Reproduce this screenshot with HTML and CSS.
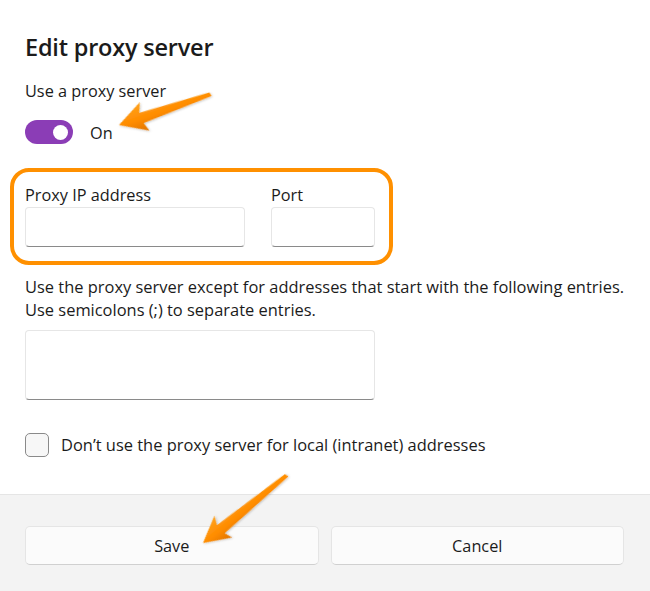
FILE: index.html
```html
<!DOCTYPE html>
<html lang="en">
<head>
<meta charset="utf-8">
<title>Edit proxy server</title>
<link rel="stylesheet" href="styles.css">
</head>
<body>
<div class="dialog">
  <div class="content">
    <h1 class="title">Edit proxy server</h1>
    <div class="label">Use a proxy server</div>
    <div class="toggle-row">
      <span class="toggle"><span class="knob"></span></span>
      <span class="toggle-text">On</span>
    </div>
    <div class="fields">
      <div class="field field-ip">
        <div class="field-label">Proxy IP address</div>
        <div class="input"></div>
      </div>
      <div class="field field-port">
        <div class="field-label">Port</div>
        <div class="input"></div>
      </div>
    </div>
    <p class="desc">Use the proxy server except for addresses that start with the following entries.<br>Use semicolons (;) to separate entries.</p>
    <div class="textarea"></div>
    <div class="check-row">
      <span class="checkbox"></span>
      <span class="check-text">Don’t use the proxy server for local (intranet) addresses</span>
    </div>
  </div>
  <div class="footer">
    <button class="btn">Save</button>
    <button class="btn">Cancel</button>
  </div>
</div>
<svg class="annotations" width="650" height="591" viewBox="0 0 650 591">
  <defs>
    <linearGradient id="ag" x1="0" y1="0" x2="0" y2="1">
      <stop offset="0" stop-color="#ffa21c"/>
      <stop offset="0.55" stop-color="#ff8c00"/>
      <stop offset="1" stop-color="#e07400"/>
    </linearGradient>
    <filter id="sh" x="-20%" y="-20%" width="140%" height="140%">
      <feDropShadow dx="0.5" dy="1" stdDeviation="0.8" flood-color="#000" flood-opacity="0.25"/>
    </filter>
  </defs>
  <rect class="hl" x="12" y="170" width="379" height="93" rx="17" ry="17"/>
  <g transform="translate(119 125) rotate(-18.6)" filter="url(#sh)">
    <polygon points="0,0 27,-15 23,-5 96,-2 97,2 24,6 27,15" fill="url(#ag)"/>
  </g>
  <g transform="translate(203 543) rotate(-39)" filter="url(#sh)">
    <polygon points="0,0 26,-14 22,-5 107,-2 108,2 23,6 26,14" fill="url(#ag)"/>
  </g>
</svg>
</body>
</html>
```
FILE: styles.css
```css
html, body {
  margin: 0;
  padding: 0;
}
body {
  width: 650px;
  height: 591px;
  background: #ffffff;
  font-family: "Open Sans", "Noto Sans", sans-serif;
  color: #1b1b1b;
  position: relative;
  overflow: hidden;
}
.dialog {
  display: flex;
  flex-direction: column;
  height: 591px;
}
.content {
  padding: 33px 25px 0 25px;
  height: 461px;
  box-sizing: border-box;
}
.title {
  margin: 0;
  font-size: 23.5px;
  line-height: 28px;
  font-weight: 600;
  letter-spacing: -0.2px;
}
.label {
  margin-top: 20px;
  font-size: 16.3px;
  line-height: 20px;
}
.toggle-row {
  display: flex;
  align-items: center;
  margin-top: 19px;
  height: 24px;
}
.toggle {
  width: 48px;
  height: 24px;
  border-radius: 12px;
  background: #8b3db6;
  position: relative;
  display: flex;
  align-items: center;
  justify-content: flex-end;
  padding-right: 5px;
  box-sizing: border-box;
}
.knob {
  width: 15px;
  height: 15px;
  border-radius: 50%;
  background: #fff;
}
.toggle-text {
  margin-left: 17px;
  font-size: 16.3px;
  line-height: 20px;
  position: relative;
  top: 1px;
}
.fields {
  display: flex;
  gap: 26px;
  margin-top: 41px;
}
.field-label {
  font-size: 16.3px;
  line-height: 20px;
}
.field-ip .input { width: 220px; }
.field-port .input { width: 104px; }
.input {
  margin-top: 2px;
  height: 40px;
  box-sizing: border-box;
  border: 1px solid #e6e6e6;
  border-bottom: 1px solid #8a8a8a;
  border-radius: 4px;
  background: #fff;
}
.desc {
  margin: 28px 0 0 0;
  font-size: 16.45px;
  line-height: 23px;
}
.textarea {
  margin-top: 9px;
  width: 350px;
  height: 70px;
  box-sizing: border-box;
  border: 1px solid #e6e6e6;
  border-bottom: 1px solid #8a8a8a;
  border-radius: 4px;
}
.check-row {
  display: flex;
  align-items: center;
  margin-top: 33px;
}
.checkbox {
  width: 24px;
  height: 24px;
  box-sizing: border-box;
  border: 1px solid #8a8a8a;
  border-radius: 5px;
  background: #f7f7f7;
}
.check-text {
  margin-left: 12px;
  font-size: 16.45px;
  line-height: 20px;
}
.footer {
  flex: 1;
  margin-top: 33px;
  background: #f3f3f3;
  border-top: 1px solid #e5e5e5;
  display: flex;
  gap: 12px;
  padding: 31px 26px 0 25px;
  box-sizing: border-box;
}
.btn {
  flex: 1;
  height: 39px;
  background: #fbfbfb;
  border: 1px solid #e5e5e5;
  border-bottom-color: #d0d0d0;
  border-radius: 5px;
  font-family: inherit;
  font-size: 16.3px;
  color: #1b1b1b;
  padding: 0;
}
.annotations {
  position: absolute;
  left: 0;
  top: 0;
  pointer-events: none;
}
.hl {
  fill: none;
  stroke: #ff9000;
  stroke-width: 4;
}
```
